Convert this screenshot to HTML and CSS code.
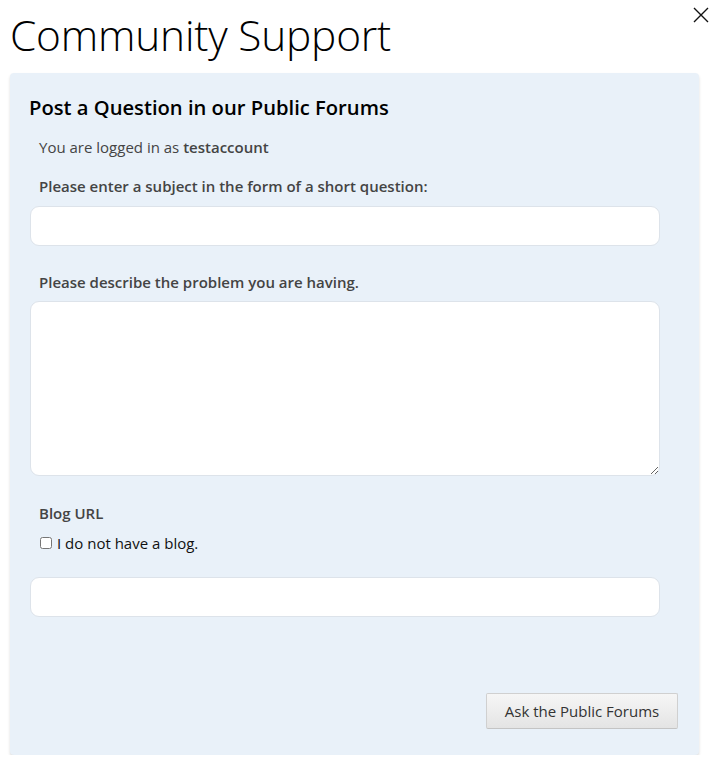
FILE: index.html
```html
<!DOCTYPE html>
<html>
<head>
<meta charset="utf-8">
<link rel="stylesheet" href="styles.css">
</head>
<body>
<div class="dialog">
  <h1 class="title">Community Support</h1>
  <button class="close" aria-label="Close">
    <svg width="16" height="16" viewBox="0 0 16 16"><path d="M1 1L15 15M15 1L1 15" stroke="#111" stroke-width="1.4" fill="none"/></svg>
  </button>
  <div class="panel">
    <h2 class="panel-title">Post a Question in our Public Forums</h2>
    <p class="logged">You are logged in as <b>testaccount</b></p>
    <label class="label">Please enter a subject in the form of a short question:</label>
    <input class="field" type="text">
    <label class="label gap">Please describe the problem you are having.</label>
    <textarea class="field area"></textarea>
    <label class="label gap2">Blog URL</label>
    <label class="check"><input type="checkbox"> I do not have a blog.</label>
    <input class="field url" type="text">
    <div class="actions">
      <button class="btn">Ask the Public Forums</button>
    </div>
  </div>
</div>
</body>
</html>
```
FILE: styles.css
```css
html, body { margin: 0; padding: 0; background: #fff; }
body { font-family: "Open Sans", "Liberation Sans", sans-serif; color: #333; }
.dialog { position: relative; padding: 0 12px 0 10px; width: 689px; }
.title {
  margin: 0; padding-top: 9px; height: 73px; box-sizing: border-box;
  font-weight: 300; font-size: 42.4px; line-height: 52px; color: #000; letter-spacing: -0.2px;
}
.close {
  position: absolute; right: 1px; top: 6px; width: 18px; height: 18px;
  padding: 0; border: 0; background: none; display: flex; align-items: center; justify-content: center;
}
.panel {
  background: #e9f1f9; border-radius: 4px;
  box-shadow: 0 2px 3px rgba(0,0,0,0.14);
  padding: 20px 19px 26px 19px; display: flex; flex-direction: column;
}
.panel-title { margin: 0; font-size: 20.2px; font-weight: 600; color: #000; line-height: 28px; }
.logged { margin: 16px 0 0 10px; font-size: 15px; color: #444; line-height: 20px; }
.logged b { font-weight: 600; }
.label { display: block; margin: 19px 0 0 10px; font-size: 15px; font-weight: 600; color: #444; line-height: 20px; }
.label.gap { margin-top: 26px; }
.label.gap2 { margin-top: 27px; }
.field {
  display: block; box-sizing: border-box; margin: 10px 0 0 1px; width: 630px; height: 40px;
  background: #fff; border: 1px solid #dde3ea; border-radius: 9px; font: inherit; outline: none;
}
.area { height: 175px; margin-top: 9px; resize: both; }
.check { display: flex; align-items: center; margin: 10px 0 0 10px; font-size: 15px; color: #111; line-height: 20px; }
.check input { margin: 0 5px 0 1px; width: 12px; height: 12px; }
.url { margin-top: 24px; }
.actions { display: flex; justify-content: flex-end; margin-top: 76px; padding-right: 2px; }
.btn {
  font: inherit; font-size: 15px; color: #333; height: 36px; padding: 0 10px; width: 192px;
  background: linear-gradient(#f6f6f6, #e4e4e4); border: 1px solid #d0d0d0; border-bottom-color: #c4c4c4; border-radius: 2px;
}
```
